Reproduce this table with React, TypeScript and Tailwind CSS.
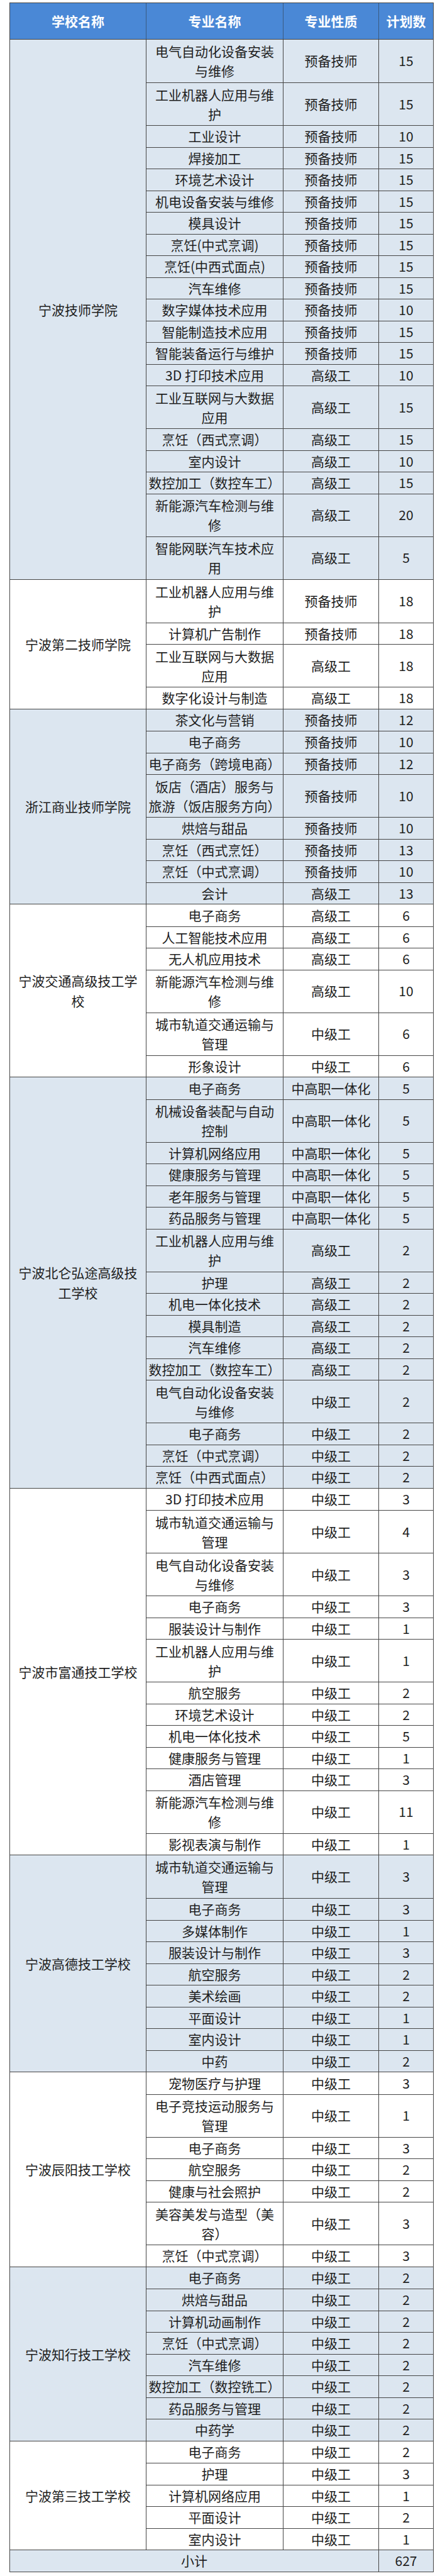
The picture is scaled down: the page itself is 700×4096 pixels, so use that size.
import React from "react"

interface Row {
  name: string[]
  kind: string
  count: number
}

interface School {
  name: string[]
  tinted: boolean
  rows: Row[]
}

// "|" marks a forced line break inside a cell
const r = (name: string, kind: string, count: number): Row => ({
  name: name.split("|"),
  kind,
  count,
})

const schools: School[] = [
  {
    name: ["宁波技师学院"],
    tinted: true,
    rows: [
      r("电气自动化设备安装|与维修", "预备技师", 15),
      r("工业机器人应用与维|护", "预备技师", 15),
      r("工业设计", "预备技师", 10),
      r("焊接加工", "预备技师", 15),
      r("环境艺术设计", "预备技师", 15),
      r("机电设备安装与维修", "预备技师", 15),
      r("模具设计", "预备技师", 15),
      r("烹饪(中式烹调)", "预备技师", 15),
      r("烹饪(中西式面点)", "预备技师", 15),
      r("汽车维修", "预备技师", 15),
      r("数字媒体技术应用", "预备技师", 10),
      r("智能制造技术应用", "预备技师", 15),
      r("智能装备运行与维护", "预备技师", 15),
      r("3D 打印技术应用", "高级工", 10),
      r("工业互联网与大数据|应用", "高级工", 15),
      r("烹饪（西式烹调）", "高级工", 15),
      r("室内设计", "高级工", 10),
      r("数控加工（数控车工）", "高级工", 15),
      r("新能源汽车检测与维|修", "高级工", 20),
      r("智能网联汽车技术应|用", "高级工", 5),
    ],
  },
  {
    name: ["宁波第二技师学院"],
    tinted: false,
    rows: [
      r("工业机器人应用与维|护", "预备技师", 18),
      r("计算机广告制作", "预备技师", 18),
      r("工业互联网与大数据|应用", "高级工", 18),
      r("数字化设计与制造", "高级工", 18),
    ],
  },
  {
    name: ["浙江商业技师学院"],
    tinted: true,
    rows: [
      r("茶文化与营销", "预备技师", 12),
      r("电子商务", "预备技师", 10),
      r("电子商务（跨境电商）", "预备技师", 12),
      r("饭店（酒店）服务与|旅游（饭店服务方向）", "预备技师", 10),
      r("烘焙与甜品", "预备技师", 10),
      r("烹饪（西式烹饪）", "预备技师", 13),
      r("烹饪（中式烹调）", "预备技师", 10),
      r("会计", "高级工", 13),
    ],
  },
  {
    name: ["宁波交通高级技工学", "校"],
    tinted: false,
    rows: [
      r("电子商务", "高级工", 6),
      r("人工智能技术应用", "高级工", 6),
      r("无人机应用技术", "高级工", 6),
      r("新能源汽车检测与维|修", "高级工", 10),
      r("城市轨道交通运输与|管理", "中级工", 6),
      r("形象设计", "中级工", 6),
    ],
  },
  {
    name: ["宁波北仑弘途高级技", "工学校"],
    tinted: true,
    rows: [
      r("电子商务", "中高职一体化", 5),
      r("机械设备装配与自动|控制", "中高职一体化", 5),
      r("计算机网络应用", "中高职一体化", 5),
      r("健康服务与管理", "中高职一体化", 5),
      r("老年服务与管理", "中高职一体化", 5),
      r("药品服务与管理", "中高职一体化", 5),
      r("工业机器人应用与维|护", "高级工", 2),
      r("护理", "高级工", 2),
      r("机电一体化技术", "高级工", 2),
      r("模具制造", "高级工", 2),
      r("汽车维修", "高级工", 2),
      r("数控加工（数控车工）", "高级工", 2),
      r("电气自动化设备安装|与维修", "中级工", 2),
      r("电子商务", "中级工", 2),
      r("烹饪（中式烹调）", "中级工", 2),
      r("烹饪（中西式面点）", "中级工", 2),
    ],
  },
  {
    name: ["宁波市富通技工学校"],
    tinted: false,
    rows: [
      r("3D 打印技术应用", "中级工", 3),
      r("城市轨道交通运输与|管理", "中级工", 4),
      r("电气自动化设备安装|与维修", "中级工", 3),
      r("电子商务", "中级工", 3),
      r("服装设计与制作", "中级工", 1),
      r("工业机器人应用与维|护", "中级工", 1),
      r("航空服务", "中级工", 2),
      r("环境艺术设计", "中级工", 2),
      r("机电一体化技术", "中级工", 5),
      r("健康服务与管理", "中级工", 1),
      r("酒店管理", "中级工", 3),
      r("新能源汽车检测与维|修", "中级工", 11),
      r("影视表演与制作", "中级工", 1),
    ],
  },
  {
    name: ["宁波高德技工学校"],
    tinted: true,
    rows: [
      r("城市轨道交通运输与|管理", "中级工", 3),
      r("电子商务", "中级工", 3),
      r("多媒体制作", "中级工", 1),
      r("服装设计与制作", "中级工", 3),
      r("航空服务", "中级工", 2),
      r("美术绘画", "中级工", 2),
      r("平面设计", "中级工", 1),
      r("室内设计", "中级工", 1),
      r("中药", "中级工", 2),
    ],
  },
  {
    name: ["宁波辰阳技工学校"],
    tinted: false,
    rows: [
      r("宠物医疗与护理", "中级工", 3),
      r("电子竞技运动服务与|管理", "中级工", 1),
      r("电子商务", "中级工", 3),
      r("航空服务", "中级工", 2),
      r("健康与社会照护", "中级工", 2),
      r("美容美发与造型（美|容）", "中级工", 3),
      r("烹饪（中式烹调）", "中级工", 3),
    ],
  },
  {
    name: ["宁波知行技工学校"],
    tinted: true,
    rows: [
      r("电子商务", "中级工", 2),
      r("烘焙与甜品", "中级工", 2),
      r("计算机动画制作", "中级工", 2),
      r("烹饪（中式烹调）", "中级工", 2),
      r("汽车维修", "中级工", 2),
      r("数控加工（数控铣工）", "中级工", 2),
      r("药品服务与管理", "中级工", 2),
      r("中药学", "中级工", 2),
    ],
  },
  {
    name: ["宁波第三技工学校"],
    tinted: false,
    rows: [
      r("电子商务", "中级工", 2),
      r("护理", "中级工", 3),
      r("计算机网络应用", "中级工", 1),
      r("平面设计", "中级工", 2),
      r("室内设计", "中级工", 1),
    ],
  },
]

const total = schools.reduce((sum, s) => sum + s.rows.reduce((a, row) => a + row.count, 0), 0)

export default function App() {
  return (
    <div className="min-h-screen bg-white pt-[4px] font-['Noto_Sans_CJK_SC','Noto_Sans',sans-serif] text-[21px] text-[#1e1e1e]">
      <div className="ml-[15px] w-[675px] border border-[#454545]">
        {/* header */}
        <div className="flex h-[57px] bg-[#4a88d6] font-bold text-white">
          <div className="flex w-[217px] items-center justify-center border-r border-[#3a5a80]">学校名称</div>
          <div className="flex w-[218px] items-center justify-center border-r border-[#3a5a80]">专业名称</div>
          <div className="flex w-[152px] items-center justify-center border-r border-[#3a5a80]">专业性质</div>
          <div className="flex flex-1 items-center justify-center">计划数</div>
        </div>

        {schools.map((school) => (
          <div
            key={school.name.join("")}
            className={`flex border-t border-[#454545] ${school.tinted ? "bg-[#dce6f0]" : "bg-white"}`}
          >
            <div className="flex w-[217px] flex-col items-center justify-center border-r border-[#454545] leading-[32px]">
              {school.name.map((line) => (
                <span key={line} className="whitespace-nowrap">{line}</span>
              ))}
            </div>
            <div className="flex flex-1 flex-col">
              {school.rows.map((row, i) => (
                <div
                  key={i}
                  className={`flex border-[#454545] ${i > 0 ? "border-t" : ""} ${row.name.length > 1 ? "h-[68px]" : "h-[34.5px]"}`}
                >
                  <div className="flex w-[218px] flex-col items-center justify-center border-r border-[#454545] leading-[31px]">
                    {row.name.map((line) => (
                      <span key={line} className="whitespace-nowrap">{line}</span>
                    ))}
                  </div>
                  <div className="flex w-[152px] items-center justify-center border-r border-[#454545] whitespace-nowrap">
                    {row.kind}
                  </div>
                  <div className="flex flex-1 items-center justify-center">{row.count}</div>
                </div>
              ))}
            </div>
          </div>
        ))}

        {/* footer */}
        <div className="flex h-[35px] border-t border-[#454545] bg-[#dce6f0]">
          <div className="flex w-[587px] items-center justify-center border-r border-[#454545]">小计</div>
          <div className="flex flex-1 items-center justify-center">{total}</div>
        </div>
      </div>
    </div>
  )
}
